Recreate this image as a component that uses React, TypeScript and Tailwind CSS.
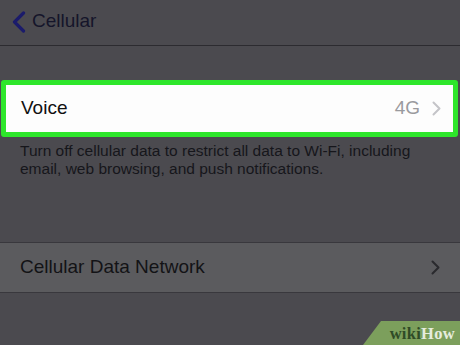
export default function App() {
  return (
    <div
      className="relative w-[460px] h-[345px] overflow-hidden bg-[#4b4a4f]"
      style={{ fontFamily: '"Liberation Sans", Arial, sans-serif' }}
    >
      {/* nav bar */}
      <div className="h-[46px] flex items-center border-b border-[#2c2b30] pl-[11px]">
        <svg width="16" height="22" viewBox="0 0 16 22" className="mb-[2px]">
          <path d="M12.5 2 L3.5 11 L12.5 20" fill="none" stroke="#1b1b6b" strokeWidth="3.2" strokeLinecap="round" strokeLinejoin="round" />
        </svg>
        <span className="ml-[5px] text-[19px] text-[#15152a] mb-[2px]">Cellular</span>
      </div>

      {/* highlighted Voice row */}
      <div className="mt-[34px] mx-[1px] w-[457px] h-[57px] border-[5px] border-[#2ee62b] rounded-[3px] bg-[#fdfdfd] flex items-center pl-[15px] pr-[12px]">
        <span className="text-[19px] text-[#111]">Voice</span>
        <span className="ml-auto text-[19px] text-[#9a9a9e]">4G</span>
        <svg width="9" height="15" viewBox="0 0 9 15" className="ml-[12px]">
          <path d="M1.5 1.5 L7.5 7.5 L1.5 13.5" fill="none" stroke="#c4c4c8" strokeWidth="2" strokeLinecap="round" strokeLinejoin="round" />
        </svg>
      </div>

      <p className="mt-[5px] px-[20px] text-[15.5px] leading-[18px] text-[#16161b]">
        Turn off cellular data to restrict all data to Wi-Fi, including
        <br />
        email, web browsing, and push notifications.
      </p>

      {/* Cellular Data Network row */}
      <div className="mt-[64px] h-[51px] border-y border-[#39383d] bg-[#5b5b5e] flex items-center pl-[20px] pr-[20px]">
        <span className="text-[19px] text-[#131316]">Cellular Data Network</span>
        <svg width="9" height="15" viewBox="0 0 9 15" className="ml-auto">
          <path d="M1.5 1.5 L7.5 7.5 L1.5 13.5" fill="none" stroke="#2a2a2e" strokeWidth="2" strokeLinecap="round" strokeLinejoin="round" />
        </svg>
      </div>

      {/* wikiHow badge */}
      <div
        className="absolute right-0 bottom-0 w-[97px] h-[24px] bg-[#7c9f5c] flex items-center justify-end pr-[5px]"
        style={{ clipPath: "polygon(18px 0, 100% 0, 100% 100%, 0 100%)" }}
      >
        <span
          className="text-[16.5px] font-bold leading-none tracking-[0.3px] mt-[3px]"
          style={{ fontFamily: '"Liberation Serif", "Times New Roman", serif' }}
        >
          <span className="text-[#2f4b26]">wiki</span>
          <span className="text-[#e6ecde]">How</span>
        </span>
      </div>
    </div>
  );
}
